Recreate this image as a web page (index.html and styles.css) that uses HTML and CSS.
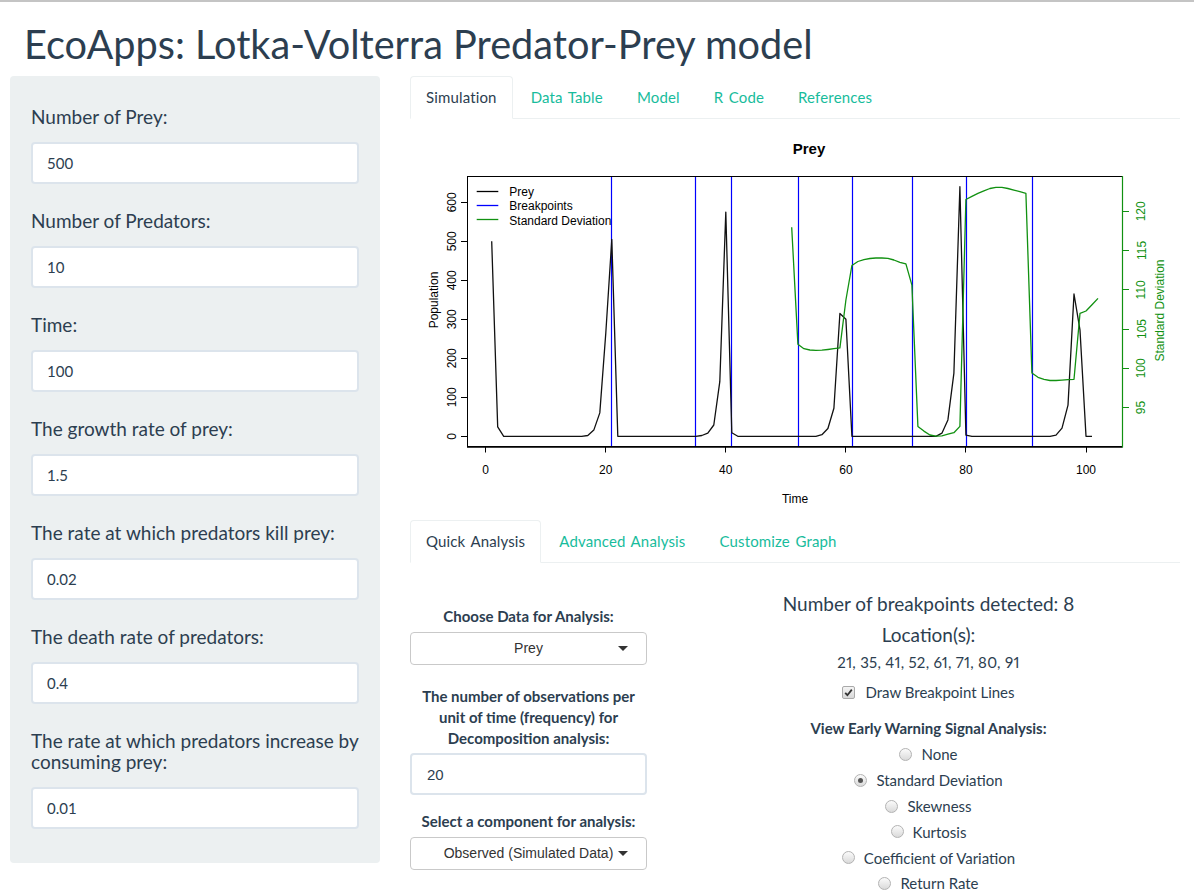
FILE: index.html
```html
<!DOCTYPE html>
<html>
<head>
<meta charset="utf-8">
<title>EcoApps: Lotka-Volterra Predator-Prey model</title>
<link rel="stylesheet" href="styles.css">
</head>
<body>
<div class="page">
  <h2 class="title">EcoApps: Lotka-Volterra Predator-Prey model</h2>
  <div class="layout">
    <aside class="well">
      <div class="field"><label>Number of Prey:</label><input class="text-input" type="text" value="500"></div>
      <div class="field"><label>Number of Predators:</label><input class="text-input" type="text" value="10"></div>
      <div class="field"><label>Time:</label><input class="text-input" type="text" value="100"></div>
      <div class="field"><label>The growth rate of prey:</label><input class="text-input" type="text" value="1.5"></div>
      <div class="field"><label>The rate at which predators kill prey:</label><input class="text-input" type="text" value="0.02"></div>
      <div class="field"><label>The death rate of predators:</label><input class="text-input" type="text" value="0.4"></div>
      <div class="field"><label>The rate at which predators increase by consuming prey:</label><input class="text-input" type="text" value="0.01"></div>
    </aside>

    <main class="main">
      <ul class="tabs">
        <li class="active"><a>Simulation</a></li>
        <li><a>Data Table</a></li>
        <li><a>Model</a></li>
        <li><a>R Code</a></li>
        <li><a>References</a></li>
      </ul>

      <svg class="plot" viewBox="410 119 770 401" xmlns="http://www.w3.org/2000/svg">
        <text class="p-title" x="809" y="154" text-anchor="middle">Prey</text>
        <g stroke="#0000ff" stroke-width="1.2">
          <line x1="611.5" y1="177" x2="611.5" y2="446"/>
          <line x1="695.5" y1="177" x2="695.5" y2="446"/>
          <line x1="731.5" y1="177" x2="731.5" y2="446"/>
          <line x1="798.5" y1="177" x2="798.5" y2="446"/>
          <line x1="852.5" y1="177" x2="852.5" y2="446"/>
          <line x1="912.5" y1="177" x2="912.5" y2="446"/>
          <line x1="966.5" y1="177" x2="966.5" y2="446"/>
          <line x1="1032.5" y1="177" x2="1032.5" y2="446"/>
        </g>
        <polyline fill="none" stroke="#111" stroke-width="1.3" stroke-linejoin="round" points="491.7,241.3 497.7,426.9 503.7,436.3 581.7,436.3 587.8,435.5 593.8,430.1 599.8,412.9 605.8,333 611.8,239.4 617.8,436.3 695.8,436.3 701.8,435.5 707.8,433.2 713.8,425 719.8,381.7 725.8,212.1 731.8,432.8 737.8,436.3 815.9,436.3 821.9,434.7 827.9,428.5 833.9,408.2 839.9,313.5 845.9,319.3 851.9,436.3 935.9,436.3 941.9,433.2 947.9,419.9 953.9,373.1 959.9,186.7 965.9,435.1 971.9,436.3 1050,436.3 1056,435.1 1062,428.1 1068,405.1 1074,294 1080,330.2 1086,436.3 1092,436.3"/>
        <polyline fill="none" stroke="#119111" stroke-width="1.3" stroke-linejoin="round" points="791.7,227.3 797.9,344.3 803.9,348.7 809.9,350 815.9,350.3 821.9,350.2 827.9,349.5 833.9,348.7 839.9,347.9 845.9,300 851.9,265.5 857.9,261.5 863.9,259.6 869.9,258.5 875.9,258 881.9,258 887.9,258.4 893.9,260 899.9,262.3 905.9,263.9 911.9,285.1 917.9,426.4 923.9,431.1 929.9,435 935.9,436.2 941.9,435.8 947.9,434.2 953.9,432.7 959.9,426.4 965.9,199.5 971.9,196.4 977.9,193.3 983.9,190.9 989.9,188.5 995.9,187.4 1001.9,187.4 1007.9,188.5 1013.9,190.1 1019.9,191.7 1025.9,193.3 1031.9,373 1038,377.3 1044,379.3 1050,380.5 1056,380.5 1062,380.1 1068,379.7 1074,379.3 1080,313.3 1086,311 1092,304.7 1098,298.4"/>
        <rect x="467.5" y="176.5" width="655" height="270" fill="none" stroke="#000" stroke-width="1"/>
        <line x1="467" y1="447" x2="1122.5" y2="447" stroke="#000" stroke-width="1.6"/>
        <line x1="1122.5" y1="176" x2="1122.5" y2="447.5" stroke="#119111" stroke-width="1.2"/>

        <g stroke="#000" stroke-width="1">
          <line x1="461" y1="436.5" x2="467.5" y2="436.5"/>
          <line x1="461" y1="397.5" x2="467.5" y2="397.5"/>
          <line x1="461" y1="358.5" x2="467.5" y2="358.5"/>
          <line x1="461" y1="319.5" x2="467.5" y2="319.5"/>
          <line x1="461" y1="280.5" x2="467.5" y2="280.5"/>
          <line x1="461" y1="241.5" x2="467.5" y2="241.5"/>
          <line x1="461" y1="202.5" x2="467.5" y2="202.5"/>
          <line x1="485.5" y1="447" x2="485.5" y2="452.5"/>
          <line x1="605.5" y1="447" x2="605.5" y2="452.5"/>
          <line x1="725.5" y1="447" x2="725.5" y2="452.5"/>
          <line x1="845.5" y1="447" x2="845.5" y2="452.5"/>
          <line x1="965.5" y1="447" x2="965.5" y2="452.5"/>
          <line x1="1086.5" y1="447" x2="1086.5" y2="452.5"/>
        </g>
        <g stroke="#119111" stroke-width="1">
          <line x1="1122.5" y1="407.5" x2="1129" y2="407.5"/>
          <line x1="1122.5" y1="368.5" x2="1129" y2="368.5"/>
          <line x1="1122.5" y1="329.5" x2="1129" y2="329.5"/>
          <line x1="1122.5" y1="289.5" x2="1129" y2="289.5"/>
          <line x1="1122.5" y1="250.5" x2="1129" y2="250.5"/>
          <line x1="1122.5" y1="211.5" x2="1129" y2="211.5"/>
        </g>

        <g class="p-label" text-anchor="middle">
          <text x="456.5" y="436.3" transform="rotate(-90 456.5 436.3)">0</text>
          <text x="456.5" y="397.3" transform="rotate(-90 456.5 397.3)">100</text>
          <text x="456.5" y="358.3" transform="rotate(-90 456.5 358.3)">200</text>
          <text x="456.5" y="319.3" transform="rotate(-90 456.5 319.3)">300</text>
          <text x="456.5" y="280.3" transform="rotate(-90 456.5 280.3)">400</text>
          <text x="456.5" y="241.3" transform="rotate(-90 456.5 241.3)">500</text>
          <text x="456.5" y="202.3" transform="rotate(-90 456.5 202.3)">600</text>
          <text x="437.5" y="300" transform="rotate(-90 437.5 300)">Population</text>

          <text x="485.7" y="474">0</text>
          <text x="605.7" y="474">20</text>
          <text x="725.7" y="474">40</text>
          <text x="846" y="474">60</text>
          <text x="966" y="474">80</text>
          <text x="1086" y="474">100</text>
          <text x="795" y="503">Time</text>
        </g>
        <g class="p-label p-green" text-anchor="middle">
          <text x="1145.5" y="407.6" transform="rotate(-90 1145.5 407.6)">95</text>
          <text x="1145.5" y="368.3" transform="rotate(-90 1145.5 368.3)">100</text>
          <text x="1145.5" y="329" transform="rotate(-90 1145.5 329)">105</text>
          <text x="1145.5" y="289.8" transform="rotate(-90 1145.5 289.8)">110</text>
          <text x="1145.5" y="250.5" transform="rotate(-90 1145.5 250.5)">115</text>
          <text x="1145.5" y="211.3" transform="rotate(-90 1145.5 211.3)">120</text>
          <text x="1163.5" y="310.5" transform="rotate(-90 1163.5 310.5)">Standard Deviation</text>
        </g>

        <g stroke-width="1.3">
          <line x1="476.7" y1="191.5" x2="498.3" y2="191.5" stroke="#000"/>
          <line x1="476.7" y1="205.5" x2="498.3" y2="205.5" stroke="#0000ff"/>
          <line x1="476.7" y1="219.5" x2="498.3" y2="219.5" stroke="#119111"/>
        </g>
        <g class="p-label">
          <text x="509.3" y="196">Prey</text>
          <text x="509.3" y="210.3">Breakpoints</text>
          <text x="509.3" y="224.5">Standard Deviation</text>
        </g>
      </svg>

      <ul class="tabs">
        <li class="active"><a>Quick Analysis</a></li>
        <li><a>Advanced Analysis</a></li>
        <li><a>Customize Graph</a></li>
      </ul>

      <div class="analysis">
        <div class="col-left">
          <div class="ctl">
            <div class="ctl-label">Choose Data for Analysis:</div>
            <div class="select">Prey<span class="caret"></span></div>
          </div>
          <div class="ctl ctl-freq">
            <div class="ctl-label ctl-label-multi">The number of observations per unit of time (frequency) for Decomposition analysis:</div>
            <input class="num-input" type="text" value="20">
          </div>
          <div class="ctl">
            <div class="ctl-label">Select a component for analysis:</div>
            <div class="select">Observed (Simulated Data)<span class="caret"></span></div>
          </div>
        </div>

        <div class="col-right">
          <h4 class="res-head">Number of breakpoints detected: 8</h4>
          <h4 class="res-head res-loc">Location(s):</h4>
          <div class="locations">21, 35, 41, 52, 61, 71, 80, 91</div>
          <div class="check-row">
            <span class="checkbox"><svg viewBox="0 0 13 13" width="13" height="13"><path d="M3.2 6.8 L5.4 9.2 L9.8 3.6" fill="none" stroke="#333" stroke-width="1.8"/></svg></span>
            <span>Draw Breakpoint Lines</span>
          </div>
          <div class="ews-label">View Early Warning Signal Analysis:</div>
          <div class="radio-row"><span class="radio"></span><span>None</span></div>
          <div class="radio-row"><span class="radio checked"></span><span>Standard Deviation</span></div>
          <div class="radio-row"><span class="radio"></span><span>Skewness</span></div>
          <div class="radio-row"><span class="radio"></span><span>Kurtosis</span></div>
          <div class="radio-row"><span class="radio"></span><span>Coefficient of Variation</span></div>
          <div class="radio-row"><span class="radio"></span><span>Return Rate</span></div>
        </div>
      </div>
    </main>
  </div>
</div>
</body>
</html>
```

FILE: styles.css
```css
* { box-sizing: border-box; }

html, body { margin: 0; }

body {
  font-family: Lato, "Noto Sans", sans-serif;
  font-size: 15px;
  color: #2c3e50;
  background: #fff;
  border-top: 2px solid #c4c4c4;
  overflow: hidden;
}

.page { padding: 0 14px 0 10px; }

.title {
  font-size: 39.7px;
  font-weight: 400;
  line-height: 44px;
  margin: 19.5px 0 10.5px;
  padding-left: 14px;
}

.layout {
  display: flex;
  gap: 30px;
  align-items: flex-start;
}

/* sidebar */
.well {
  width: 370px;
  flex: none;
  background: #ecf0f1;
  border-radius: 4px;
  padding: 19px 21px;
}

.field {
  display: flex;
  flex-direction: column;
  padding-top: 10.5px;
  margin-bottom: 15px;
}

.field label {
  font-size: 19px;
  line-height: 21px;
  margin-bottom: 15.5px;
}

.text-input {
  height: 42px;
  width: 100%;
  border: 2px solid #dce4ec;
  border-radius: 4px;
  padding: 0 14px;
  font-family: Lato, "Noto Sans", sans-serif;
  font-size: 15px;
  color: #2c3e50;
  background: #fff;
  outline: none;
}

/* main */
.main {
  width: 770px;
  flex: none;
}

.tabs {
  list-style: none;
  margin: 0;
  padding: 0;
  display: flex;
  border-bottom: 1px solid #ecf0f1;
}

.tabs li {
  margin-right: 2px;
  margin-bottom: -1px;
}

.tabs a {
  display: block;
  padding: 10px 15px;
  line-height: 21px;
  border: 1px solid transparent;
  border-radius: 4px 4px 0 0;
  color: #18bc9c;
  text-decoration: none;
  word-spacing: 1.5px;
  letter-spacing: 0.15px;
}

.tabs li.active a {
  color: #2c3e50;
  background: #fff;
  border-color: #ecf0f1;
  border-bottom-color: transparent;
}

.plot {
  display: block;
  width: 770px;
  height: 401px;
  font-family: "Liberation Sans", Arial, sans-serif;
}

.p-title { font-size: 15px; font-weight: 700; fill: #000; }
.p-label { font-size: 12px; fill: #000; }
.p-green { fill: #119111; }

/* analysis */
.analysis {
  display: flex;
  gap: 30px;
}

.col-left {
  width: 237px;
  flex: none;
  padding-top: 42.5px;
  text-align: center;
}

.ctl-label {
  font-weight: 700;
  line-height: 21px;
  margin-bottom: 5px;
}

.ctl-label-multi { line-height: 20.8px; }

.ctl { margin-bottom: 21.5px; }
.ctl-freq { margin-bottom: 16px; }

.select {
  position: relative;
  height: 33px;
  border: 1px solid #c9c9c9;
  border-radius: 4px;
  font-family: "Liberation Sans", Arial, sans-serif;
  font-size: 14px;
  line-height: 31px;
  color: #333;
  background: #fff;
  text-align: center;
}

.caret {
  position: absolute;
  right: 18px;
  top: 13px;
  width: 0;
  height: 0;
  border-left: 5px solid transparent;
  border-right: 5px solid transparent;
  border-top: 5px solid #333;
}

.num-input {
  display: block;
  width: 100%;
  height: 42px;
  border: 2px solid #dce4ec;
  border-radius: 4px;
  padding: 0 15px;
  font-family: "Liberation Sans", Arial, sans-serif;
  font-size: 15px;
  color: #2c3e50;
  background: #fff;
  outline: none;
}

.col-right {
  width: 503px;
  flex: none;
  padding-top: 30.3px;
  text-align: center;
}

.res-head {
  font-size: 19px;
  font-weight: 400;
  line-height: 21px;
  margin: 0 0 10px;
}

.res-loc { margin-bottom: 7px; }

.locations {
  line-height: 21px;
  margin-bottom: 8.4px;
  font-variant-numeric: proportional-nums;
  letter-spacing: 0.28px;
}

.check-row,
.radio-row {
  display: flex;
  justify-content: center;
  align-items: center;
  height: 21px;
}

.check-row { gap: 10px; }
.radio-row { gap: 9px; margin-bottom: 4.8px; }

.checkbox {
  width: 13px;
  height: 13px;
  border: 1px solid #a9a9a9;
  border-radius: 2px;
  background: linear-gradient(#f4f4f4, #d8d8d8);
  display: flex;
}

.checkbox svg { display: block; margin: -1px; }

.ews-label {
  font-weight: 700;
  line-height: 21px;
  margin: 15.3px 0 5px;
}

.radio {
  width: 13px;
  height: 13px;
  border: 1px solid #b3b3b3;
  border-radius: 50%;
  background: linear-gradient(#fbfbfb, #dadada);
  display: flex;
  align-items: center;
  justify-content: center;
}

.radio.checked::after {
  content: "";
  width: 5px;
  height: 5px;
  border-radius: 50%;
  background: #555;
}
```
